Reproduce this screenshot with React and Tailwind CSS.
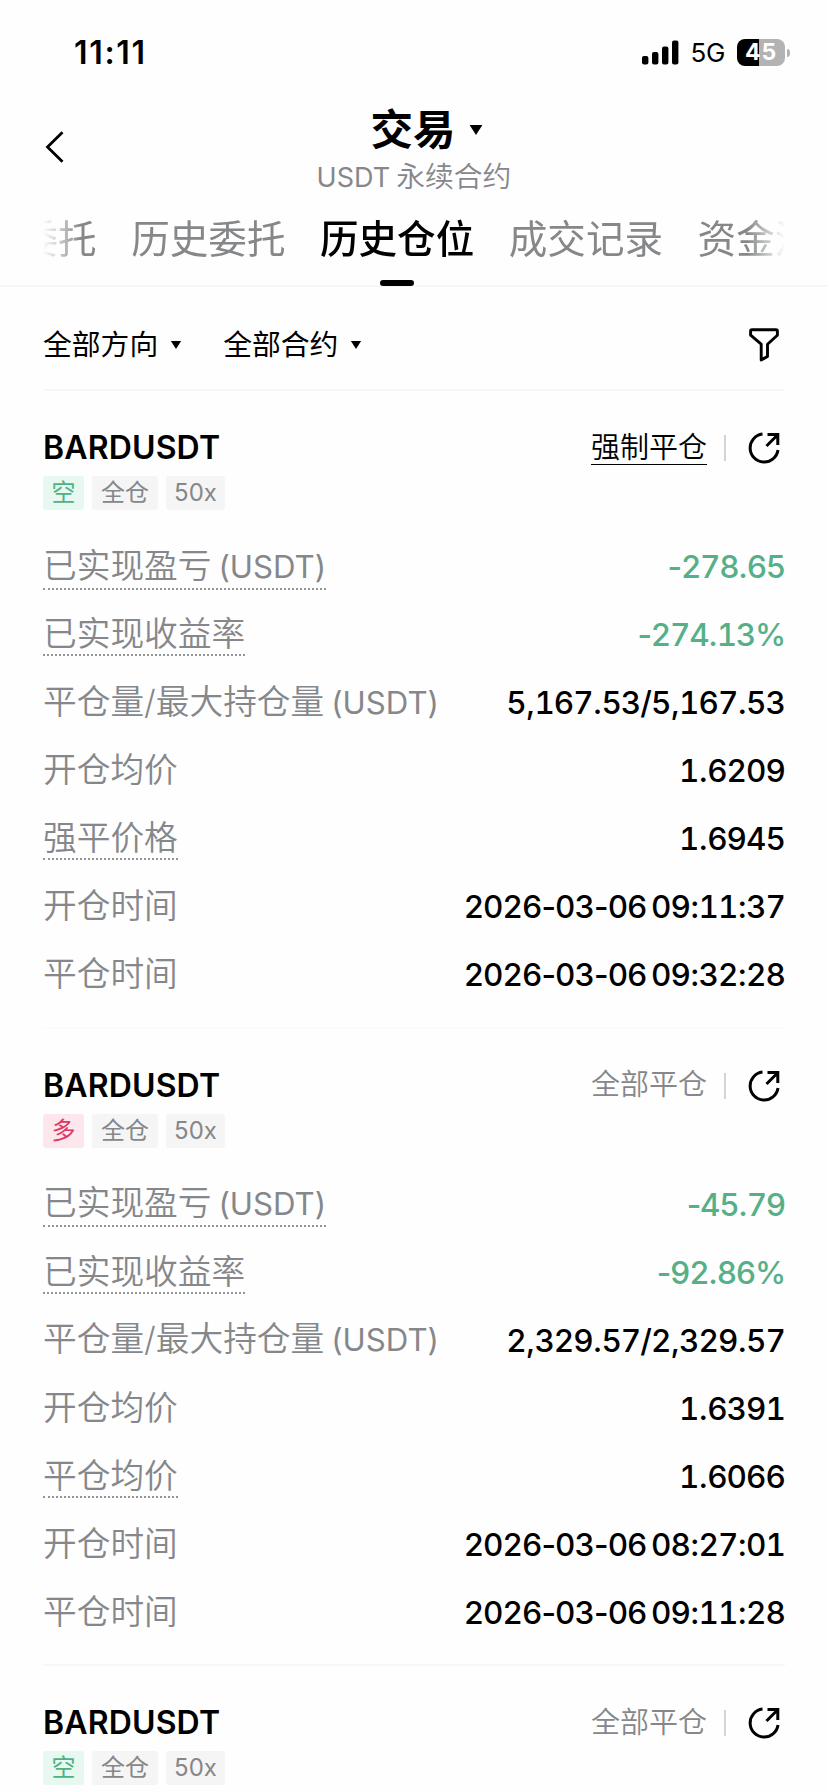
const tabs = ['历史委托', '历史仓位', '成交记录', '资金流水'];

const positions = [
    {
        symbol: 'BARDUSDT',
        side: 'short',
        status: '强制平仓',
        liquidated: true,
        rows: [
            { label: '已实现盈亏', unit: '(USDT)', value: '-278.65', hint: true, pnl: true },
            { label: '已实现收益率', value: '-274.13%', hint: true, pnl: true },
            { label: '平仓量/最大持仓量', unit: '(USDT)', value: '5,167.53/5,167.53' },
            { label: '开仓均价', value: '1.6209' },
            { label: '强平价格', value: '1.6945', hint: true },
            { label: '开仓时间', value: '2026-03-06 09:11:37' },
            { label: '平仓时间', value: '2026-03-06 09:32:28' },
        ],
    },
    {
        symbol: 'BARDUSDT',
        side: 'long',
        status: '全部平仓',
        rows: [
            { label: '已实现盈亏', unit: '(USDT)', value: '-45.79', hint: true, pnl: true },
            { label: '已实现收益率', value: '-92.86%', hint: true, pnl: true },
            { label: '平仓量/最大持仓量', unit: '(USDT)', value: '2,329.57/2,329.57' },
            { label: '开仓均价', value: '1.6391' },
            { label: '平仓均价', value: '1.6066', hint: true },
            { label: '开仓时间', value: '2026-03-06 08:27:01' },
            { label: '平仓时间', value: '2026-03-06 09:11:28' },
        ],
    },
    {
        symbol: 'BARDUSDT',
        side: 'short',
        status: '全部平仓',
        rows: [],
    },
];

function Caret({ className }) {
    return (
        <svg className={className} viewBox="0 0 14 10" fill="currentColor">
            <path d="M0.6 0h12.8L7 10z" />
        </svg>
    );
}

// Only the digits are tabular, punctuation keeps its own width
function Amount({ value }) {
    return value.split(/(\d+)/).map((part, i) =>
        /\d/.test(part) ? <span key={i} className="tabular-nums">{part}</span> : part
    );
}

function StatusBar() {
    return (
        <div className="shrink-0 h-[107px] pb-[2px] pl-[74px] pr-[38px] flex items-center justify-between">
            <span className="text-[32px] leading-none font-semibold tracking-[1.7px]">11:11</span>
            <div className="flex items-center">
                <svg className="w-[37px] h-[25px]" viewBox="0 0 37 25">
                    <rect x="0" y="16" width="6.4" height="8.5" rx="2" />
                    <rect x="10" y="12" width="6.4" height="12.5" rx="2" />
                    <rect x="20" y="6.5" width="6.4" height="18" rx="2" />
                    <rect x="30" y="0.5" width="6.4" height="24" rx="2" />
                </svg>
                <span className="ml-[11px] text-[26px] leading-none tracking-[-0.3px]">5G</span>
                <div className="ml-[12px] w-12 h-[27px] rounded-[8px] bg-[linear-gradient(to_right,#000_46%,#b3b3b3_46%)] flex items-center justify-center text-white text-[23px] leading-none font-bold tracking-[0.8px]">
                    45
                </div>
                <div className="ml-[2px] w-[3px] h-2 rounded-r-full bg-[#b3b3b3]"></div>
            </div>
        </div>
    );
}

function Header() {
    return (
        <header className="shrink-0 h-[98px] px-[45px] flex items-start">
            <svg className="mt-[24px] w-5 h-8" viewBox="0 0 20 32" fill="none" stroke="currentColor" strokeWidth="2.8">
                <path d="M17.5 1.2L2.5 16l15 14.8" />
            </svg>
            <div className="flex-1 mr-5 flex flex-col items-center">
                <div className="ml-[25px] flex items-center">
                    <h1 className="text-[42.5px] leading-[46px] font-bold">交易</h1>
                    <Caret className="ml-[13px] w-[14px] h-[10px]" />
                </div>
                <p className="mt-[6px] text-[28.8px] leading-9 font-[350] text-[#85878a] [word-spacing:-2px]">
                    <span className="text-[27px] font-normal">USDT</span> 永续合约
                </p>
            </div>
        </header>
    );
}

function Tabs() {
    return (
        <div className="shrink-0 h-[82px] border-b-2 border-[#f7f7f7] px-[43px]">
            <nav className="h-[82px] overflow-hidden flex gap-[34.5px] whitespace-nowrap text-[38.6px] leading-[68px] text-[#858789] [mask-image:linear-gradient(to_right,transparent,#000_38px,#000_calc(100%-38px),transparent)]">
                <span className="-ml-[23.5px] shrink-0">委托</span>
                {tabs.map((tab) =>
                    tab === '历史仓位' ? (
                        <div key={tab} className="shrink-0 flex flex-col items-center text-black font-medium">
                            <span>{tab}</span>
                            <div className="mt-[7px] w-[34px] h-[6px] rounded-full bg-black"></div>
                        </div>
                    ) : (
                        <span key={tab} className="shrink-0">{tab}</span>
                    )
                )}
            </nav>
        </div>
    );
}

function Filters() {
    return (
        <div className="shrink-0 mx-[43px] h-[102px] pt-[13px] flex items-center text-[28.8px]">
            <span>全部方向</span>
            <Caret className="ml-[12px] w-[12px] h-[8px]" />
            <span className="ml-[41px]">全部合约</span>
            <Caret className="ml-[12px] w-[12px] h-[8px]" />
            <svg className="ml-auto mr-[6px] w-[30px] h-[34px]" viewBox="0 0 30 34" fill="none" stroke="currentColor" strokeWidth="2.9" strokeLinejoin="round">
                <path d="M3 1.8h24q1.4 0 1.4 1.4v4L18.5 16.2v12.2l-6.3 3.6V16.2L1.6 7.2v-4Q1.6 1.8 3 1.8z" />
            </svg>
        </div>
    );
}

function Position({ position }) {
    const short = position.side === 'short';

    return (
        <section className={`mx-[43px] h-[637.5px] border-t-2 shrink-0 ${short ? 'border-[#f7f7f7]' : 'border-[#fbfbfb]'}`}>
            <div className="mt-[35px] h-[44px] flex items-center">
                <h2 className="text-[32px] font-semibold tracking-[0.15px]">{position.symbol}</h2>
                <span className={`ml-auto text-[29px] leading-[32px] font-[350] ${position.liquidated ? 'border-b border-black text-black' : 'border-b border-transparent text-[#85878a]'}`}>
                    {position.status}
                </span>
                <div className="ml-[17px] w-[2px] h-[26px] bg-[#d4d4d4]"></div>
                <svg className="ml-[22px] mr-[5px] w-8 h-8" viewBox="0 0 32 32" fill="none" stroke="currentColor" strokeWidth="3">
                    <path d="M14.5 2.1A14 14 0 1 0 30 18" />
                    <path d="M18.5 14L29 3.5M19.5 2.6h10.3v10.3" />
                </svg>
            </div>
            <div className="mt-[6px] flex gap-[8px] text-[24px] leading-[34px] text-[#85878a]">
                <span className={`w-[41px] rounded-[3px] text-center ${short ? 'bg-[#e6f8f0] text-[#4fb286]' : 'bg-[#fde6ec] text-[#d93a64]'}`}>
                    {short ? '空' : '多'}
                </span>
                <span className="w-[66px] rounded-[3px] text-center bg-[#f5f5f5]">全仓</span>
                <span className="w-[59px] rounded-[3px] text-center bg-[#f5f5f5]">50x</span>
            </div>
            <dl className="mt-[23px]">
                {position.rows.map((row) => (
                    <div key={row.label} className="h-[68px] flex items-center justify-between text-[31.5px]">
                        <dt className={`text-[33.7px] font-[350] text-[#85878a] border-b-2 border-dotted ${row.unit ? 'leading-[42px]' : 'leading-[40px]'} ${row.hint ? 'border-[#929496]' : 'border-transparent'}`}>
                            {row.label}
                            {row.unit && <span className="ml-[7px] text-[31.2px] font-normal">{row.unit}</span>}
                        </dt>
                        <dd className={`[word-spacing:-3px] ${row.pnl ? 'font-[450] tracking-[-1.25px] text-[#55b088]' : 'font-medium tracking-[-0.95px]'}`}>
                            <Amount value={row.value} />
                        </dd>
                    </div>
                ))}
            </dl>
        </section>
    );
}

export default function App() {
    return (
        <div className="w-[828px] h-[1792px] overflow-hidden flex flex-col bg-[#fefefe] text-black font-[Inter,'Noto_Sans_CJK_SC',sans-serif]">
            <StatusBar />
            <Header />
            <Tabs />
            <Filters />
            {positions.map((position, i) => (
                <Position key={i} position={position} />
            ))}
        </div>
    );
}
